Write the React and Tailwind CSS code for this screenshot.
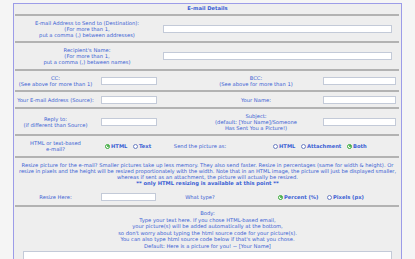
import React from "react";

const Rule = () => <div className="h-[2px] bg-[#b2b2b2] ml-[1px] mr-[2px]" />;

const Field = ({ className }) => (
  <div className={`h-[8px] bg-white border border-[#c3cad8] ${className}`} />
);

const Radio = ({ label, checked, className = "" }) => (
  <div className={`flex items-center ${className}`}>
    <span
      className={`w-[5px] h-[5px] rounded-full border flex items-center justify-center bg-white ${
        checked ? "border-[#33aa33]" : "border-[#6b7fc2]"
      }`}
    >
      {checked && <span className="w-[2px] h-[2px] rounded-full bg-[#2f9f2f]" />}
    </span>
    <span className="ml-[1px] font-bold">{label}</span>
  </div>
);

const App = () => {
  return (
    <div
      className="h-[259px] overflow-hidden bg-[#f5f5f5] pt-[3px] pl-[13px] text-[#3a5fd4] text-[5.2px] leading-[6px]"
      style={{ fontFamily: '"DejaVu Sans", Verdana, sans-serif' }}
    >
      <div className="w-[389px] h-[280px] bg-[#eeeeee] border-l border-t border-r border-[#9c9ce8]">
        <div className="h-[10px] pt-[1px] text-center font-bold">E-mail Details</div>
        <Rule />

        <div className="h-[25px] flex items-center">
          <div className="w-[146px] text-center">
            E-mail Address to Send to (Destination):
            <br />
            (For more than 1,
            <br />
            put a comma (,) between addresses)
          </div>
          <Field className="ml-[3px] w-[229px]" />
        </div>
        <Rule />

        <div className="h-[26px] flex items-center">
          <div className="w-[146px] text-center">
            Recipient's Name:
            <br />
            (For more than 1,
            <br />
            put a comma (,) between names)
          </div>
          <Field className="ml-[3px] w-[229px]" />
        </div>
        <Rule />

        <div className="h-[19px] flex items-center">
          <div className="w-[83px] text-center">
            CC:
            <br />
            (See above for more than 1)
          </div>
          <div className="w-[63px]">
            <Field className="ml-[4px] w-[56px]" />
          </div>
          <div className="w-[160px] pl-[32px] text-center">
            BCC:
            <br />
            (See above for more than 1)
          </div>
          <Field className="ml-[3px] w-[73px]" />
        </div>
        <Rule />

        <div className="h-[15px] flex items-center">
          <div className="w-[83px] text-center">Your E-mail Address (Source):</div>
          <div className="w-[63px]">
            <Field className="ml-[4px] w-[56px]" />
          </div>
          <div className="w-[160px] pl-[32px] text-center">Your Name:</div>
          <Field className="ml-[3px] w-[73px]" />
        </div>
        <Rule />

        <div className="h-[25px] flex items-center">
          <div className="w-[83px] text-center">
            Reply to:
            <br />
            (if different than Source)
          </div>
          <div className="w-[63px]">
            <Field className="ml-[4px] w-[56px]" />
          </div>
          <div className="w-[160px] pl-[32px] text-center">
            Subject:
            <br />
            (default: [Your Name]/Someone
            <br />
            Has Sent You a Picture!)
          </div>
          <Field className="ml-[3px] w-[73px]" />
        </div>
        <Rule />

        <div className="h-[20px] flex items-center">
          <div className="w-[83px] text-center">
            HTML or text-based
            <br />
            e-mail?
          </div>
          <div className="w-[63px] pl-[8px] flex">
            <Radio label="HTML" checked className="w-[28px]" />
            <Radio label="Text" />
          </div>
          <div className="w-[80px] text-center">Send the picture as:</div>
          <div className="pl-[33px] flex">
            <Radio label="HTML" className="w-[28px]" />
            <Radio label="Attachment" className="w-[46px]" />
            <Radio label="Both" checked />
          </div>
        </div>
        <Rule />

        <div className="h-[47px] pt-[4px]">
          <div className="text-center leading-[6.1px] whitespace-nowrap">
            Resize picture for the e-mail? Smaller pictures take up less memory. They also send faster. Resize in percentages (same for width &amp; height). Or
            <br />
            <span className="tracking-[-0.04px]">
              resize in pixels and the height will be resized proportionately with the width. Note that in an HTML image, the picture will just be displayed smaller,
            </span>
            <br />
            whereas if sent as an attachment, the picture will actually be resized.
            <br />
            <span className="font-bold">** only HTML resizing is available at this point **</span>
          </div>
          <div className="h-[8px] mt-[7px] flex items-center">
            <div className="w-[83px] text-center">Resize Here:</div>
            <div className="w-[63px]">
              <Field className="ml-[4px] w-[55px]" />
            </div>
            <div className="w-[80px] text-center">What type?</div>
            <div className="pl-[38px] flex">
              <Radio label="Percent (%)" checked className="w-[49px]" />
              <Radio label="Pixels (px)" />
            </div>
          </div>
        </div>
        <Rule />

        <div className="pt-[3px] text-center leading-[6.6px]">
          Body:
          <br />
          Type your text here. If you chose HTML-based email,
          <br />
          your picture(s) will be added automatically at the bottom,
          <br />
          so don't worry about typing the html source code for your picture(s).
          <br />
          You can also type html source code below if that's what you chose.
          <br />
          Default: Here is a picture for you! ~ [Your Name]
        </div>
        <div className="ml-[9px] mt-[1px] w-[369px] h-[40px] bg-white border border-[#c3cad8]" />
      </div>
    </div>
  );
};

export default App;
